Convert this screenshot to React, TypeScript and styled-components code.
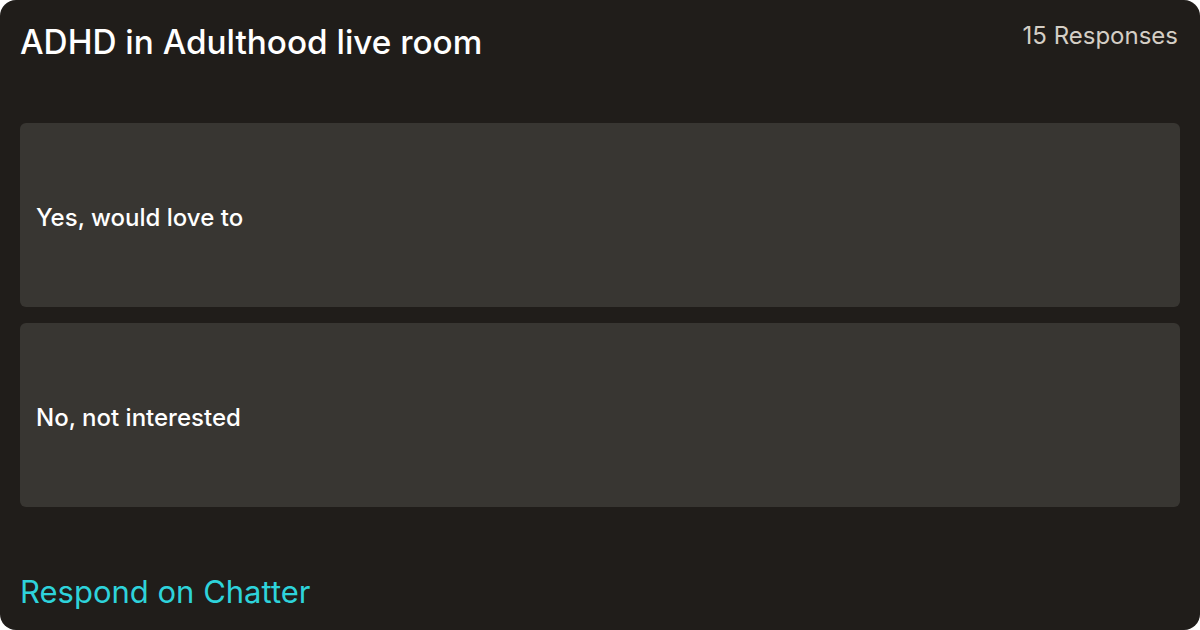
import styled, { createGlobalStyle } from "styled-components";

const GlobalStyle = createGlobalStyle`
  html, body {
    margin: 0;
    padding: 0;
    background: #ffffff;
  }
  body {
    font-family: Inter, "Liberation Sans", sans-serif;
  }
`;

const Card = styled.div`
  box-sizing: border-box;
  width: 1200px;
  height: 630px;
  background-color: #201d1a;
  border-radius: 16px;
  padding: 20px 20px 0 20px;
  display: flex;
  flex-direction: column;
  overflow: hidden;
`;

const Header = styled.div`
  display: flex;
  justify-content: space-between;
  align-items: flex-start;
  height: 103px;
`;

const Title = styled.h1`
  margin: 0;
  font-size: 33.3px;
  font-weight: 500;
  line-height: 44px;
  color: #ffffff;
`;

const Count = styled.span`
  font-size: 24px;
  line-height: 32px;
  color: #d4cec5;
  padding-right: 2px;
`;

const Options = styled.ul`
  list-style: none;
  margin: 0;
  padding: 0;
  display: flex;
  flex-direction: column;
  gap: 16px;
`;

const Option = styled.li`
  height: 184px;
  background-color: #383632;
  border-radius: 6px;
  display: flex;
  align-items: center;
  padding: 4px 16px 0;
  box-sizing: border-box;
  font-size: 24px;
  font-weight: 500;
  color: #ffffff;
`;

const Footer = styled.a`
  margin-top: auto;
  margin-bottom: 18px;
  font-size: 31px;
  line-height: 40px;
  color: #2ed3db;
  text-decoration: none;
`;

const options = ["Yes, would love to", "No, not interested"];

const App = () => {
  return (
    <>
      <GlobalStyle />
      <Card>
        <Header>
          <Title>ADHD in Adulthood live room</Title>
          <Count>15 Responses</Count>
        </Header>
        <Options>
          {options.map((o) => (
            <Option key={o}>{o}</Option>
          ))}
        </Options>
        <Footer>Respond on Chatter</Footer>
      </Card>
    </>
  );
};

export default App;
